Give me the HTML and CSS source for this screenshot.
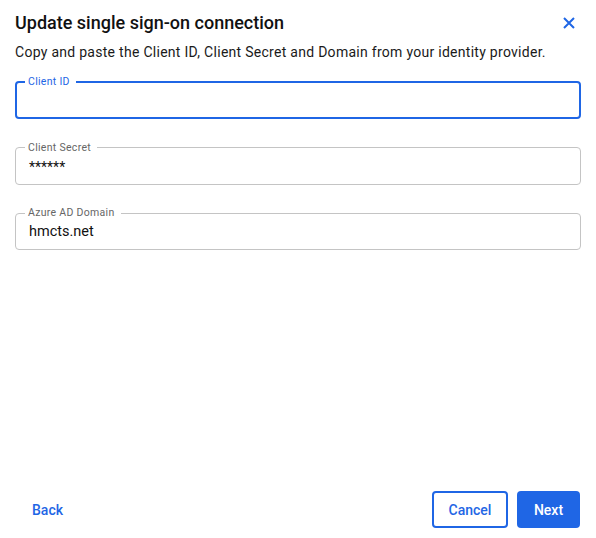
FILE: index.html
```html
<!DOCTYPE html>
<html>
<head>
<meta charset="utf-8">
<link rel="stylesheet" href="styles.css">
</head>
<body>
<div class="dialog">
  <div class="header">
    <h1 class="title">Update single sign-on connection</h1>
    <button class="close" aria-label="Close">
      <svg width="12" height="12" viewBox="0 0 12 12"><path d="M1 1L11 11M11 1L1 11" stroke="#1f66e5" stroke-width="2" fill="none"/></svg>
    </button>
  </div>
  <p class="desc">Copy and paste the Client ID, Client Secret and Domain from your identity provider.</p>
  <div class="fields">
    <fieldset class="field focused">
      <legend>Client ID</legend>
      <div class="value"></div>
    </fieldset>
    <fieldset class="field">
      <legend>Client Secret</legend>
      <div class="value secret">******</div>
    </fieldset>
    <fieldset class="field">
      <legend>Azure AD Domain</legend>
      <div class="value">hmcts.net</div>
    </fieldset>
  </div>
  <div class="footer">
    <button class="btn link">Back</button>
    <div class="right">
      <button class="btn outline">Cancel</button>
      <button class="btn primary">Next</button>
    </div>
  </div>
</div>
</body>
</html>
```
FILE: styles.css
```css
html, body { margin: 0; padding: 0; background: #fff; }
body { font-family: Roboto, "Noto Sans", sans-serif; color: #1a1a1a; }
.dialog {
  width: 596px; height: 538px; box-sizing: border-box;
  padding: 11px 15px 10px 15px;
  display: flex; flex-direction: column;
}
.header { display: flex; justify-content: space-between; align-items: center; height: 24px; }
.title { margin: 0; font-size: 18px; font-weight: 500; color: #111; line-height: 24px; }
.close { border: 0; background: none; padding: 0; width: 14px; height: 14px; margin-right: 5px; display: flex; align-items: center; justify-content: center; cursor: pointer; }
.desc { margin: 7px 0 0 0; font-size: 14px; line-height: 20px; color: #1a1a1a; letter-spacing: 0.28px; }
.fields { display: flex; flex-direction: column; gap: 22.5px; margin-top: 14px; }
.field {
  margin: 0; padding: 0; border: 1px solid #c4c4c4; border-radius: 4px;
  height: 43px; box-sizing: border-box; min-width: 0;
}
.field legend { font-size: 10.5px; color: #666; padding: 0 6px 0 3px; margin-left: 9px; line-height: 12px; letter-spacing: 0.3px; }
.field.focused { border: 2px solid #1f66e5; }
.field.focused legend { color: #1f66e5; margin-left: 8px; }
.value { font-size: 14.5px; line-height: 20px; color: #111; padding: 3px 0 0 13px; }
.focused .value { padding-left: 12px; }
.secret { font-size: 14px; padding-top: 5px; line-height: 16px; }
.footer { margin-top: auto; display: flex; justify-content: space-between; align-items: center; padding-right: 1px; }
.right { display: flex; gap: 9px; }
.btn { font-family: Roboto, sans-serif; font-size: 14px; font-weight: 500; border-radius: 4px; height: 37px; box-sizing: border-box; cursor: pointer; }
.link { background: none; border: 0; color: #1f66e5; padding: 0 17px; }
.outline { background: #fff; border: 2px solid #1f66e5; color: #1f66e5; width: 76px; }
.primary { background: #1f66e5; border: 0; color: #fff; width: 63px; }
```
